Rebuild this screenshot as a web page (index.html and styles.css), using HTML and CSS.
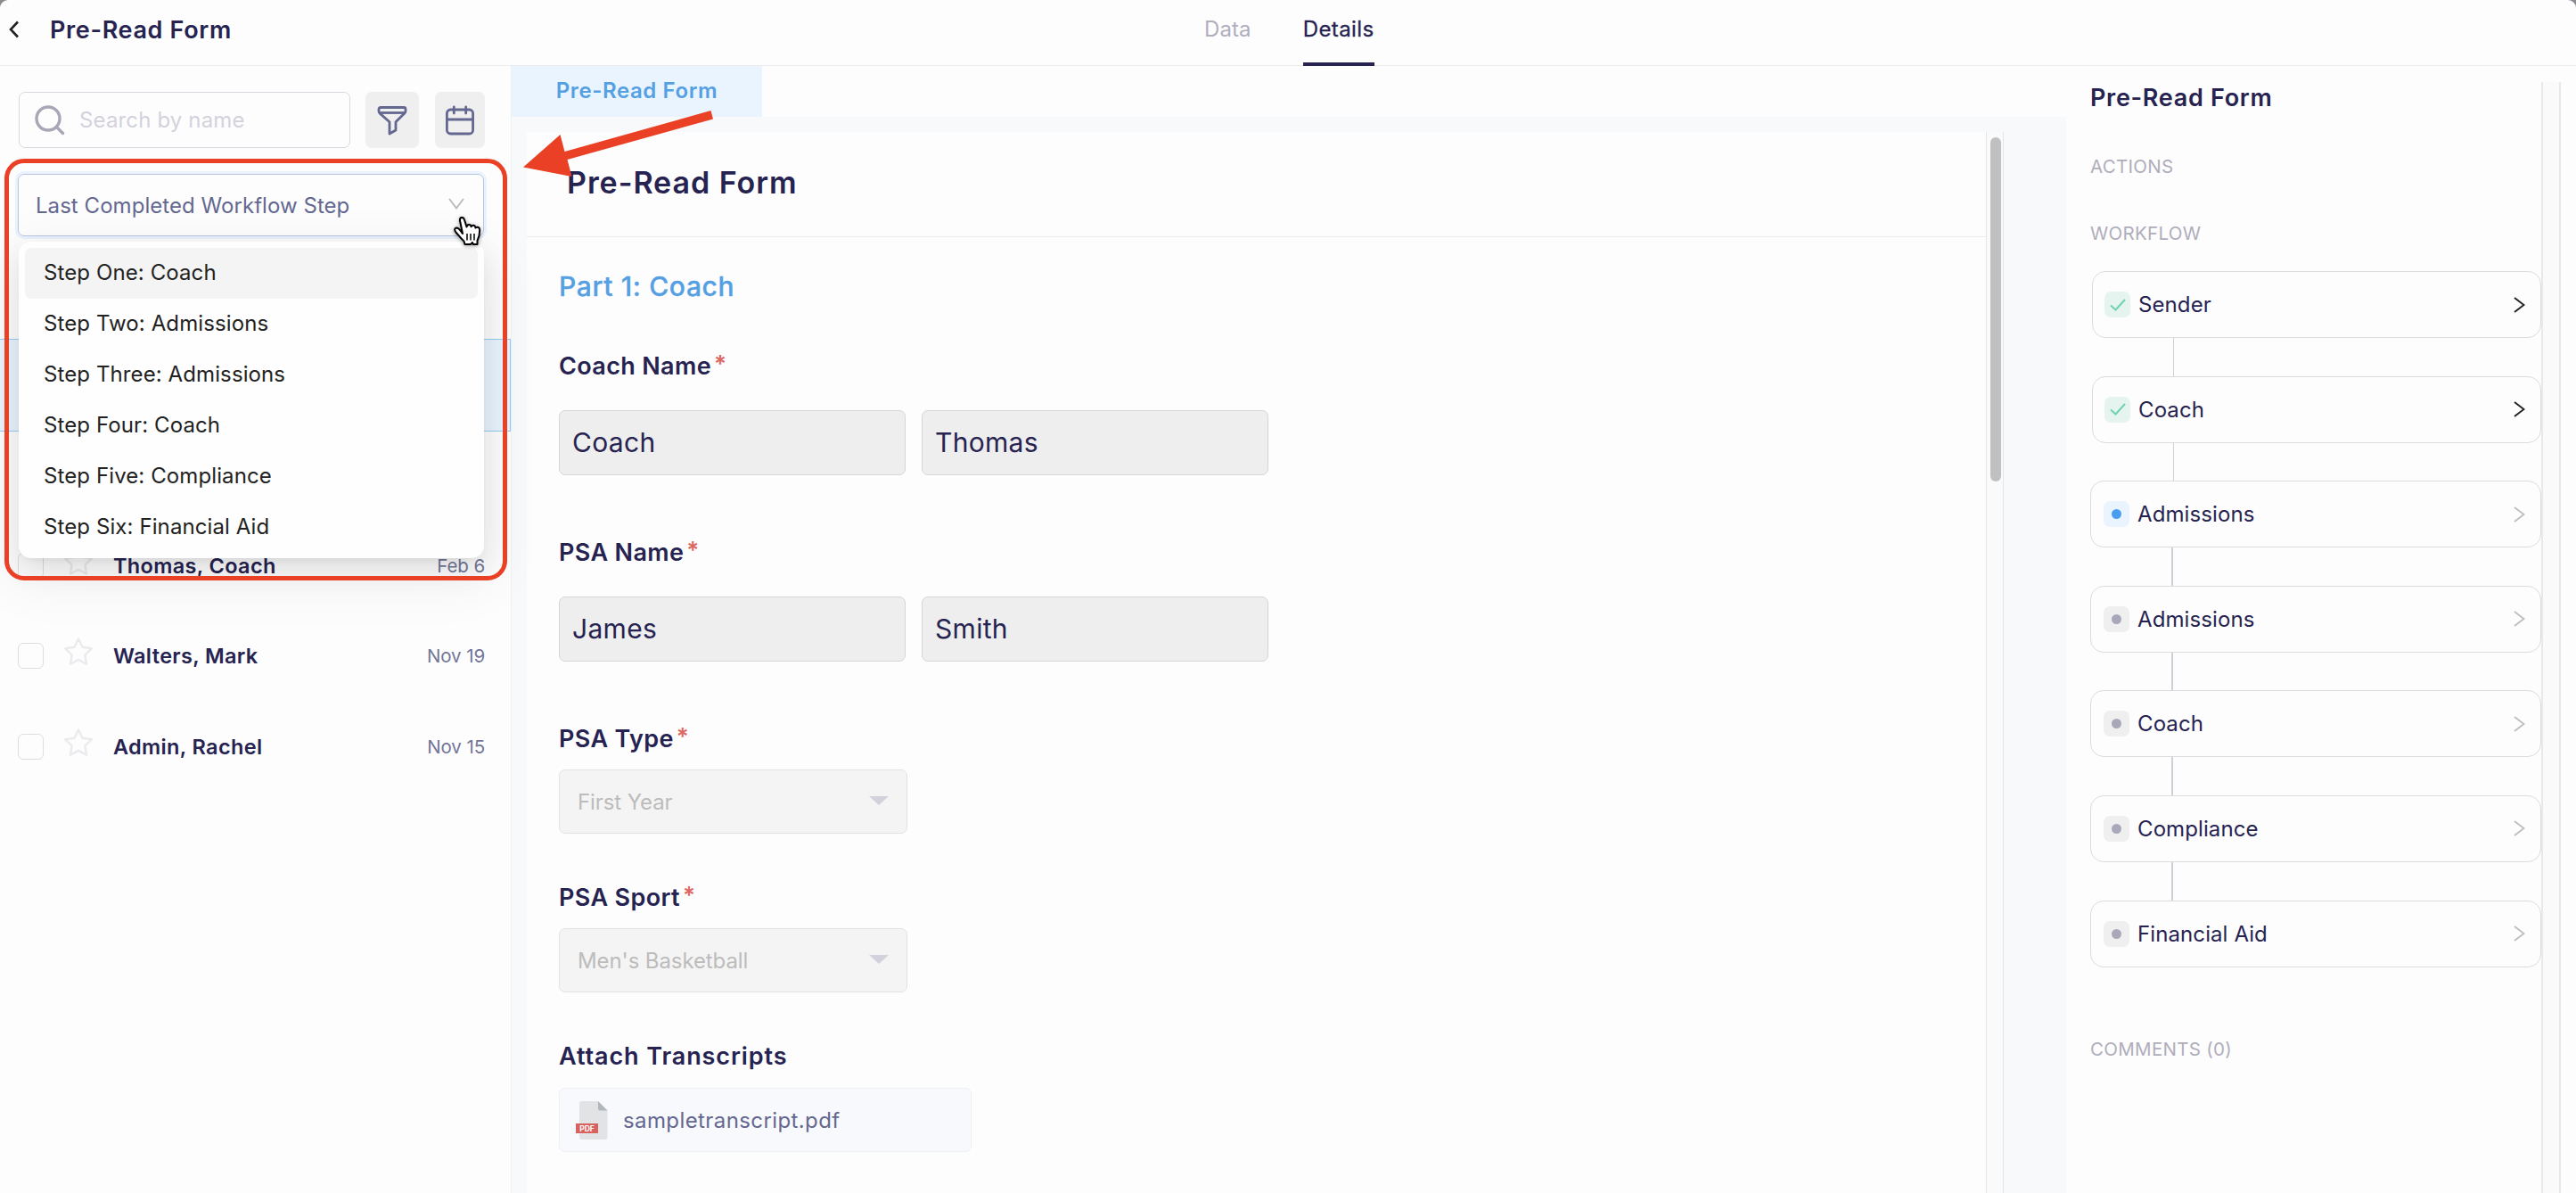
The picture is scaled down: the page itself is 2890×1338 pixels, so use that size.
FILE: index.html
```
<!DOCTYPE html>
<html lang="en">
<head>
    <meta charset="UTF-8">
    <meta name="viewport" content="width=device-width, initial-scale=1.0">
    <title>Pre-Read Form</title>
    <link rel="stylesheet" href="styles.css">
</head>
<body>

    <div class="app">

        <!-- Top Bar -->
        <header class="topbar">
            <svg class="back" width="12" height="20" viewBox="0 0 12 20"><path d="M10 1.5L2 10l8 8.5" fill="none" stroke="#222" stroke-width="2.6"/></svg>
            <h1 class="page-title">Pre-Read Form</h1>
            <nav class="nav">
                <a class="nav-link">Data</a>
                <a class="nav-link nav-active">Details</a>
            </nav>
        </header>

        <div class="content">

            <!-- Sidebar -->
            <aside class="sidebar">
                <div class="search-row">
                    <div class="search">
                        <svg width="34" height="34" viewBox="0 0 34 34" fill="none" stroke="#a9a6b8" stroke-width="3.4" stroke-linecap="round"><circle cx="15" cy="15" r="13"/><path d="M24.5 24.5l7 7"/></svg>
                        <span>Search by name</span>
                    </div>
                    <button class="icon-btn filter-btn">
                        <svg width="34" height="34" viewBox="0 0 34 34" fill="none" stroke="#646890" stroke-width="2.8" stroke-linejoin="round"><path d="M4 2.5h26a2 2 0 0 1 2 2v2.2c0 1-.4 1.7-1.1 2.4L21 18.8V28l-7 4V18.8L3.1 9.1C2.4 8.4 2 7.7 2 6.7V4.5a2 2 0 0 1 2-2z"/><path d="M2.5 8.5h29"/></svg>
                    </button>
                    <button class="icon-btn">
                        <svg width="34" height="34" viewBox="0 0 34 34" fill="none" stroke="#646890" stroke-width="2.8" stroke-linecap="round"><rect x="2.4" y="5" width="29.2" height="27" rx="4"/><path d="M2.4 16h29.2M10.3 2v7M23.7 2v7"/></svg>
                    </button>
                </div>

                <div class="step-select">
                    <span>Last Completed Workflow Step</span>
                    <svg width="18" height="13" viewBox="0 0 18 13"><path d="M1 1l8 10.5L17 1" fill="none" stroke="#bdbdc0" stroke-width="2"/></svg>
                    <ul class="dropdown">
                        <li class="option highlighted">Step One: Coach</li>
                        <li class="option">Step Two: Admissions</li>
                        <li class="option">Step Three: Admissions</li>
                        <li class="option">Step Four: Coach</li>
                        <li class="option">Step Five: Compliance</li>
                        <li class="option">Step Six: Financial Aid</li>
                    </ul>
                </div>

                <div class="people">
                    <div class="person selected"></div>
                    <div class="person"></div>
                    <div class="person">
                        <span class="checkbox"></span>
                        <svg class="star" width="34" height="34" viewBox="0 0 34 34"><path d="M17 2.5l4.5 9.3 10.3 1.5-7.5 7.2 1.8 10.2L17 25.9l-9.1 4.8 1.8-10.2-7.5-7.2 10.3-1.5z"/></svg>
                        <span class="name">Thomas, Coach</span>
                        <span class="date">Feb 6</span>
                    </div>
                    <div class="person">
                        <span class="checkbox"></span>
                        <svg class="star" width="34" height="34" viewBox="0 0 34 34"><path d="M17 2.5l4.5 9.3 10.3 1.5-7.5 7.2 1.8 10.2L17 25.9l-9.1 4.8 1.8-10.2-7.5-7.2 10.3-1.5z"/></svg>
                        <span class="name">Walters, Mark</span>
                        <span class="date">Nov 19</span>
                    </div>
                    <div class="person">
                        <span class="checkbox"></span>
                        <svg class="star" width="34" height="34" viewBox="0 0 34 34"><path d="M17 2.5l4.5 9.3 10.3 1.5-7.5 7.2 1.8 10.2L17 25.9l-9.1 4.8 1.8-10.2-7.5-7.2 10.3-1.5z"/></svg>
                        <span class="name">Admin, Rachel</span>
                        <span class="date">Nov 15</span>
                    </div>
                </div>
            </aside>

            <!-- Form -->
            <main class="main">
                <div class="tabs">
                    <div class="tab">Pre-Read Form</div>
                </div>
                <div class="sheet-wrap">
                    <div class="sheet">
                        <h2 class="sheet-title">Pre-Read Form</h2>
                        <div class="fields">
                            <h3 class="part">Part 1: Coach</h3>

                            <label class="label">Coach Name<sup>*</sup></label>
                            <div class="name-fields">
                                <div class="input">Coach</div>
                                <div class="input">Thomas</div>
                            </div>

                            <label class="label">PSA Name<sup>*</sup></label>
                            <div class="name-fields">
                                <div class="input">James</div>
                                <div class="input">Smith</div>
                            </div>

                            <label class="label">PSA Type<sup>*</sup></label>
                            <div class="select"><span>First Year</span><i class="caret"></i></div>

                            <label class="label label-next">PSA Sport<sup>*</sup></label>
                            <div class="select"><span>Men's Basketball</span><i class="caret"></i></div>

                            <label class="label label-next label-attach">Attach Transcripts</label>
                            <div class="file">
                                <svg width="36" height="43" viewBox="0 0 36 43">
                                    <path d="M7 0h18l10.5 10.5V40a3 3 0 0 1-3 3H7a3 3 0 0 1-3-3V3a3 3 0 0 1 3-3z" fill="#e2e3e5"/>
                                    <path d="M25 0l10.5 10.5H27a2 2 0 0 1-2-2z" fill="#b0b7bd"/>
                                    <rect y="25" width="25" height="11" fill="#d8625e"/>
                                    <text x="12.5" y="33.5" text-anchor="middle" class="pdf">PDF</text>
                                </svg>
                                <span>sampletranscript.pdf</span>
                            </div>
                        </div>
                    </div>
                    <div class="track"><div class="thumb"></div></div>
                </div>
            </main>

            <!-- Workflow Panel -->
            <aside class="panel">
                <div class="panel-body">
                    <h2 class="panel-title">Pre-Read Form</h2>
                    <p class="caption">ACTIONS</p>
                    <p class="caption caption-workflow">WORKFLOW</p>

                    <div class="workflow">
                        <div class="step done">
                            <span class="status"><svg width="18" height="14" viewBox="0 0 18 14"><path d="M1 7.5l5.5 5L17 1"/></svg></span>
                            <span>Sender</span>
                            <svg class="chevron" width="13" height="18" viewBox="0 0 13 18"><path d="M1 1l10.5 8L1 17"/></svg>
                        </div>
                        <div class="line thin"></div>
                        <div class="step done">
                            <span class="status"><svg width="18" height="14" viewBox="0 0 18 14"><path d="M1 7.5l5.5 5L17 1"/></svg></span>
                            <span>Coach</span>
                            <svg class="chevron" width="13" height="18" viewBox="0 0 13 18"><path d="M1 1l10.5 8L1 17"/></svg>
                        </div>
                        <div class="line thin"></div>
                        <div class="step current">
                            <span class="status"><i class="dot"></i></span>
                            <span>Admissions</span>
                            <svg class="chevron" width="13" height="18" viewBox="0 0 13 18"><path d="M1 1l10.5 8L1 17"/></svg>
                        </div>
                        <div class="line"></div>
                        <div class="step">
                            <span class="status"><i class="dot"></i></span>
                            <span>Admissions</span>
                            <svg class="chevron" width="13" height="18" viewBox="0 0 13 18"><path d="M1 1l10.5 8L1 17"/></svg>
                        </div>
                        <div class="line"></div>
                        <div class="step">
                            <span class="status"><i class="dot"></i></span>
                            <span>Coach</span>
                            <svg class="chevron" width="13" height="18" viewBox="0 0 13 18"><path d="M1 1l10.5 8L1 17"/></svg>
                        </div>
                        <div class="line"></div>
                        <div class="step">
                            <span class="status"><i class="dot"></i></span>
                            <span>Compliance</span>
                            <svg class="chevron" width="13" height="18" viewBox="0 0 13 18"><path d="M1 1l10.5 8L1 17"/></svg>
                        </div>
                        <div class="line"></div>
                        <div class="step">
                            <span class="status"><i class="dot"></i></span>
                            <span>Financial Aid</span>
                            <svg class="chevron" width="13" height="18" viewBox="0 0 13 18"><path d="M1 1l10.5 8L1 17"/></svg>
                        </div>
                    </div>

                    <p class="caption comments">COMMENTS (0)</p>
                </div>
                <div class="panel-track"></div>
            </aside>
        </div>

        <!-- Highlight around the step filter -->
        <div class="callout"></div>
        <svg class="arrow" width="216" height="76" viewBox="0 0 216 76"><path d="M0 65.5L41.5 29l5 19L210.5 2l2.5 9.5L49.5 57l5 19z" fill="#ea4025"/></svg>
        <svg class="cursor" width="34" height="36" viewBox="0 0 34 36">
            <path d="M11 20L8 5.5C7.5 1 12 .8 13 4.5l2.5 8C16 9.5 20 9 20.6 12.3 22 10 25 10.3 25.5 13.5c2-1.7 4.7-.5 4.7 2.5 0 5-.7 8-2.7 12v4H23l-1-2-2 2h-6.5l-1-3.5C9 25.5 6.5 22 3.5 18.5 1.5 16 1.8 14 4 13.5c3 0 4.5 3 7 6.5z" fill="#fff" stroke="#000" stroke-width="2" stroke-linejoin="round"/>
            <path d="M16 20v7.5M20 20v7.5M24 20v7.5" stroke="#000" stroke-width="1.5"/>
        </svg>
    </div>

</body>
</html>
```
FILE: styles.css
```
/* General Styles */
* {
    box-sizing: border-box;
}

html {
    background: #8b8b90;
}

body {
    margin: 0;
    font-family: Inter, Roboto, sans-serif;
    color: #262351;
}

h1, h2, h3, p, ul {
    margin: 0;
    padding: 0;
    font-weight: 600;
}

svg {
    display: block;
    flex: none;
}

.app {
    position: relative;
    display: flex;
    flex-direction: column;
    height: 1338px;
    overflow: hidden;
    background: #fdfdfe;
    border-radius: 9px 9px 0 0;
}

/* Top Bar */
.topbar {
    display: flex;
    align-items: center;
    flex: none;
    height: 74px;
    border-bottom: 1px solid #ebebed;
}

.back {
    margin: 0 0 7px 10px;
}

.page-title {
    width: 1294px;
    margin-left: 34px;
    padding-bottom: 6px;
    font-size: 27px;
    letter-spacing: 0.65px;
}

.nav {
    display: flex;
    gap: 58px;
    height: 74px;
    margin-bottom: -1px;
}

.nav-link {
    height: 74px;
    margin-left: 1px;
    font-size: 24px;
    line-height: 66px;
    letter-spacing: 0.1px;
    color: #b0adbf;
}

.nav-active {
    margin-left: 0;
    color: #262351;
    border-bottom: 4px solid #262351;
    -webkit-text-stroke: 0.3px #262351;
    letter-spacing: 0.4px;
}

.content {
    display: flex;
    flex: 1;
    min-height: 0;
}

/* Sidebar */
.sidebar {
    width: 574px;
    flex: none;
    padding-top: 29px;
    border-right: 1px solid #eff0f2;
}

.search-row {
    display: flex;
    height: 63px;
    padding-left: 21px;
}

.search {
    display: flex;
    align-items: center;
    width: 372px;
    gap: 16px;
    padding-left: 17px;
    border: 1px solid #d8d8e0;
    border-radius: 7px;
    font-size: 24px;
    letter-spacing: 0.15px;
    color: #d3d2dc;
}

.icon-btn {
    display: flex;
    align-items: center;
    justify-content: center;
    width: 56px;
    margin-left: 18px;
    padding: 0;
    border: none;
    border-radius: 7px;
    background: #efefef;
}

.filter-btn {
    width: 60px;
    margin-left: 17px;
}

/* Step filter */
.step-select {
    position: relative;
    display: flex;
    align-items: center;
    justify-content: space-between;
    width: 523px;
    height: 70px;
    margin: 29px 0 0 20px;
    padding: 0 21px 0 19px;
    border: 1px solid #b9c6df;
    border-radius: 7px;
    box-shadow: 0 0 0 3px #eaf3fd;
    font-size: 24px;
    letter-spacing: 0.05px;
    color: #646890;
}

.step-select > svg {
    margin-bottom: 4px;
}

.dropdown {
    position: absolute;
    top: 75px;
    left: 0;
    z-index: 2;
    width: 522px;
    height: 355px;
    padding: 7px;
    border-radius: 14px;
    background: #fefefe;
    box-shadow: 0 18px 56px 16px rgba(0, 0, 0, 0.05), 0 12px 32px rgba(0, 0, 0, 0.08), 0 6px 12px -8px rgba(0, 0, 0, 0.12);
    list-style: none;
}

.option {
    height: 57px;
    padding-left: 21px;
    border-radius: 7px;
    font-size: 24px;
    font-weight: 400;
    line-height: 56px;
    letter-spacing: 0.1px;
    color: #222;
}

.highlighted {
    background: #f4f4f4;
}

/* People list */
.people {
    margin-top: 115px;
}

.person {
    display: flex;
    align-items: center;
    height: 101.5px;
    padding: 0 29px 0 20px;
}

.selected {
    height: 104px;
    margin-bottom: -2px;
    background: #e9f4fe;
    border: 1px solid #93cdf3;
    border-left: none;
}

.checkbox {
    width: 29px;
    height: 29px;
    border: 1px solid #dedee0;
    border-radius: 6px;
}

.star {
    margin: 0 0 9px 22px;
    fill: none;
    stroke: #ebebed;
    stroke-width: 2.4;
    stroke-linejoin: round;
}

.name {
    flex: 1;
    margin-left: 22px;
    font-size: 23.5px;
    font-weight: 600;
    letter-spacing: 0.35px;
}

.date {
    font-size: 20.5px;
    letter-spacing: -0.1px;
    color: #737697;
}

/* Form */
.main {
    display: flex;
    flex-direction: column;
    width: 1744px;
    flex: none;
}

.tabs {
    display: flex;
    height: 57px;
}

.tab {
    width: 281px;
    background: #e9f4fe;
    font-size: 24px;
    font-weight: 600;
    line-height: 56px;
    letter-spacing: 0.6px;
    text-align: center;
    color: #559fe3;
}

.sheet-wrap {
    display: flex;
    flex: 1;
    padding: 17px 0 0 17px;
    background: #f7f9fb;
}

.sheet {
    width: 1637px;
    background: #fdfdfe;
}

.sheet-title {
    height: 118px;
    padding-left: 45px;
    border-bottom: 1px solid #ebebed;
    font-size: 34px;
    line-height: 114px;
    letter-spacing: 0.95px;
}

.fields {
    display: flex;
    flex-direction: column;
    padding: 35px 0 0 36px;
}

.part {
    margin-bottom: 52px;
    font-size: 30px;
    font-weight: 500;
    line-height: 40px;
    letter-spacing: 0.65px;
    color: #559fe3;
    -webkit-text-stroke: 0.3px #559fe3;
}

.label {
    font-size: 27px;
    font-weight: 600;
    line-height: 36px;
    letter-spacing: 0.35px;
}

.label sup {
    margin-left: 3px;
    font-size: 26px;
    line-height: 0;
    vertical-align: 3px;
    color: #dc6862;
}

.name-fields {
    display: flex;
    gap: 18px;
    margin: 31px 0 69px;
}

.input {
    width: 389px;
    height: 73px;
    padding-left: 14px;
    border: 1px solid #d5d5db;
    border-radius: 7px;
    background: #eee;
    font-size: 30px;
    line-height: 71px;
    letter-spacing: 0.3px;
}

.select {
    display: flex;
    align-items: center;
    justify-content: space-between;
    width: 391px;
    height: 72px;
    margin-top: 16px;
    padding: 0 20px 0 20px;
    border: 1px solid #e2e2e2;
    border-radius: 7px;
    background: #f4f4f4;
    font-size: 24px;
    letter-spacing: -0.1px;
    color: #bcbcbc;
}

.caret {
    margin-bottom: 2px;
    border: 11px solid transparent;
    border-top: 10px solid #d2d1dc;
    border-bottom: none;
}

.label-next {
    margin-top: 54px;
}

.label-attach {
    letter-spacing: 0.9px;
}

.file {
    display: flex;
    align-items: center;
    gap: 14px;
    width: 463px;
    height: 72px;
    margin-top: 17px;
    padding-left: 18px;
    border: 1px solid #eef0f3;
    border-radius: 7px;
    background: #f8f9fc;
    font-size: 24px;
    letter-spacing: 0.4px;
    color: #646890;
}

.file span {
    margin-left: 3px;
}

.pdf {
    font-size: 8.5px;
    font-weight: 700;
    letter-spacing: 0;
    fill: #fff;
}

.track {
    width: 20px;
    padding: 6px 0 0 4px;
    border: 1px solid #e6e6e6;
    border-width: 0 1px;
    background: #fafafa;
}

.thumb {
    width: 12px;
    height: 386px;
    border-radius: 6px;
    background: #c0c0c0;
}

/* Workflow Panel */
.panel {
    display: flex;
    flex: 1;
    padding-top: 18px;
}

.panel-body {
    width: 533px;
    padding-left: 27px;
}

.panel-title {
    font-size: 27px;
    line-height: 36px;
    letter-spacing: 0.7px;
}

.caption {
    margin-top: 44px;
    font-size: 20.5px;
    font-weight: 400;
    line-height: 30px;
    letter-spacing: 0.3px;
    color: #b0adbb;
}

.caption-workflow {
    margin: 45px 0 27px;
}

.step {
    display: flex;
    align-items: center;
    height: 75px;
    padding: 0 17px 0 14px;
    border: 1px solid #dcdcde;
    border-radius: 15px;
    font-size: 24px;
    letter-spacing: 0.1px;
}

.done {
    margin-left: 2px;
}

.status {
    display: flex;
    align-items: center;
    justify-content: center;
    width: 29px;
    height: 29px;
    margin-right: 9px;
    border-radius: 7px;
    background: #efeff0;
}

.done .status {
    margin-left: -1px;
    background: #e6f4ef;
}

.status path {
    fill: none;
    stroke: #6fd3b0;
    stroke-width: 2;
}

.current .status {
    background: #e9f4fe;
}

.dot {
    width: 11px;
    height: 11px;
    border-radius: 50%;
    background: #a9a8ba;
}

.current .dot {
    background: #4a9ef0;
}

.chevron {
    margin-left: auto;
    fill: none;
    stroke: #bfbfbf;
    stroke-width: 2;
}

.done .chevron {
    stroke: #222;
}

.line {
    width: 2px;
    height: 42.6px;
    margin-left: 91px;
    background: #d0cfd7;
}

.thin {
    width: 1px;
    margin-left: 93px;
}

.comments {
    margin-top: 77px;
}

.panel-track {
    width: 22px;
    border: 2px solid #e9e9e9;
    border-width: 0 2px;
    background: #fafafa;
}

/* Overlays */
.callout {
    position: absolute;
    top: 178px;
    left: 5px;
    z-index: 3;
    width: 564px;
    height: 473px;
    border: 5px solid #ea4025;
    border-radius: 22px;
}

.arrow {
    position: absolute;
    top: 122px;
    left: 587px;
}

.cursor {
    position: absolute;
    top: 242px;
    left: 508px;
    z-index: 4;
    filter: drop-shadow(0 1px 2px rgba(0, 0, 0, 0.4));
}
```
